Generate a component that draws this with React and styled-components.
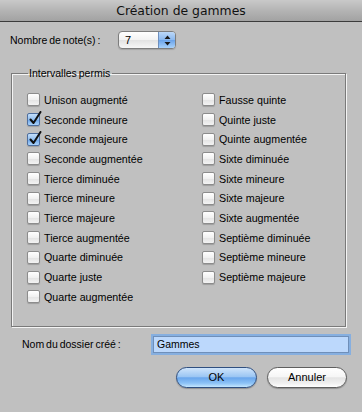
import styled, { createGlobalStyle } from 'styled-components';

const GlobalStyle = createGlobalStyle`
  html, body {
    margin: 0;
    padding: 0;
    background: #c0c0c0;
  }
  body {
    font-family: 'Liberation Sans', Arial, sans-serif;
    color: #000;
  }
`;

const Window = styled.div`
  width: 362px;
  height: 412px;
  background: #c0c0c0;
  display: flex;
  flex-direction: column;
  overflow: hidden;
`;

const TitleBar = styled.div`
  height: 21px;
  border-bottom: 1px solid #3c3c3c;
  background: linear-gradient(#c9c9c9, #b4b4b4 50%, #a2a2a2);
  display: flex;
  align-items: center;
  justify-content: center;
  font-family: 'DejaVu Sans', sans-serif;
  font-size: 12.4px;
  color: #111;
`;

const NoteRow = styled.div`
  display: flex;
  align-items: center;
  height: 18px;
  margin-top: 9px;
  padding-left: 10px;
`;

const Label = styled.span`
  font-size: 10.5px;
  word-spacing: -1px;
  width: ${(p) => p.$width}px;
  flex: none;
`;

const Popup = styled.div`
  width: 58px;
  height: 18px;
  box-sizing: border-box;
  border: 1px solid #7d7d7d;
  border-radius: 4px;
  display: flex;
  overflow: hidden;
  background: linear-gradient(#ffffff, #f2f2f2 50%, #e2e2e2 51%, #f6f6f6);
  box-shadow: 0 1px 1px rgba(0, 0, 0, 0.15);
`;

const PopupValue = styled.span`
  flex: 1;
  padding-left: 6px;
  font-size: 11px;
  line-height: 16px;
`;

const PopupArrows = styled.div`
  width: 16px;
  border-left: 1px solid #6e8fbd;
  background: linear-gradient(#bcd8f8, #8ab8ef 50%, #6aa3ea 51%, #a8d2fb);
  display: flex;
  align-items: center;
  justify-content: center;
`;

const Group = styled.fieldset`
  margin: 18px 0 0 11px;
  width: 335px;
  box-sizing: border-box;
  padding: 10px 0 19px 15px;
  border: 1px solid #7a7a7a;
  box-shadow: 1px 1px 0 #f4f4f4, inset 1px 1px 0 #f4f4f4;
`;

const Legend = styled.legend`
  font-size: 10.5px;
  word-spacing: -1px;
  padding: 0 2px 0 1px;
  margin-left: 1px;
  line-height: 13px;
`;

const Columns = styled.div`
  display: grid;
  grid-template-columns: 175px 1fr;
`;

const Column = styled.div`
  display: flex;
  flex-direction: column;
`;

const Item = styled.label`
  display: flex;
  align-items: center;
  height: 19.7px;
  gap: 4px;
  font-size: 10.7px;
`;

const Box = styled.span`
  position: relative;
  width: 13px;
  height: 13px;
  box-sizing: border-box;
  border-radius: 2px;
  flex: none;
  border: 1px solid ${(p) => (p.$checked ? '#4f6f9f' : '#8c8c8c')};
  background: ${(p) =>
    p.$checked
      ? 'linear-gradient(#c4def9, #92c0f1 50%, #6ca5ea 51%, #a9d3fb)'
      : 'linear-gradient(#ffffff, #f1f1f1 50%, #e3e3e3 51%, #f3f3f3)'};
  box-shadow: 0 1px 1px rgba(0, 0, 0, 0.18);
`;

const Tick = styled.svg`
  position: absolute;
  left: 1px;
  top: -3px;
`;

const NameRow = styled.div`
  display: flex;
  align-items: center;
  margin-top: 9px;
  padding-left: 22px;
`;

const TextField = styled.div`
  width: 196px;
  height: 17px;
  box-sizing: border-box;
  border: 1px solid #6f8fb9;
  background: #bcd8fc;
  box-shadow: 0 0 0 2px #86afe0;
  font-size: 10.5px;
  line-height: 15px;
  padding-left: 3px;
`;

const ButtonRow = styled.div`
  display: flex;
  justify-content: flex-end;
  gap: 10px;
  margin-top: 14px;
  padding-right: 15px;
`;

const Button = styled.button`
  width: ${(p) => p.$width}px;
  height: 21px;
  border-radius: 11px;
  font-family: 'Liberation Sans', Arial, sans-serif;
  font-size: 11px;
  color: #000;
  padding: 0;
  border: 1px solid ${(p) => (p.$primary ? '#2f4f80' : '#5e5e5e')};
  background: ${(p) =>
    p.$primary
      ? 'linear-gradient(#cfe4fb, #9cc6f3 45%, #6aa6ec 52%, #8cc2f6 80%, #c4e6fe)'
      : 'linear-gradient(#ffffff, #f6f6f6 45%, #e4e4e4 52%, #f0f0f0 80%, #ffffff)'};
  box-shadow: 0 1px 1px rgba(0, 0, 0, 0.25);
`;

const left = [
  ['Unison augmenté', false],
  ['Seconde mineure', true],
  ['Seconde majeure', true],
  ['Seconde augmentée', false],
  ['Tierce diminuée', false],
  ['Tierce mineure', false],
  ['Tierce majeure', false],
  ['Tierce augmentée', false],
  ['Quarte diminuée', false],
  ['Quarte juste', false],
  ['Quarte augmentée', false],
];

const right = [
  ['Fausse quinte', false],
  ['Quinte juste', false],
  ['Quinte augmentée', false],
  ['Sixte diminuée', false],
  ['Sixte mineure', false],
  ['Sixte majeure', false],
  ['Sixte augmentée', false],
  ['Septième diminuée', false],
  ['Septième mineure', false],
  ['Septième majeure', false],
];

function Checkbox({ label, checked }) {
  return (
    <Item>
      <Box $checked={checked}>
        {checked && (
          <Tick width="13" height="14" viewBox="0 0 13 14">
            <path d="M1.5 8.5 L4.5 12 L11.5 1" fill="none" stroke="#111" strokeWidth="2" strokeLinecap="round" strokeLinejoin="round" />
          </Tick>
        )}
      </Box>
      {label}
    </Item>
  );
}

export default function App() {
  return (
    <>
      <GlobalStyle />
      <Window>
        <TitleBar>Création de gammes</TitleBar>
        <NoteRow>
          <Label $width={108}>Nombre de note(s) :</Label>
          <Popup>
            <PopupValue>7</PopupValue>
            <PopupArrows>
              <svg width="7" height="11" viewBox="0 0 7 11">
                <path d="M3.5 0.5 L6.5 4 L0.5 4 Z M3.5 10.5 L6.5 7 L0.5 7 Z" fill="#1a1a1a" />
              </svg>
            </PopupArrows>
          </Popup>
        </NoteRow>
        <Group>
          <Legend>Intervalles permis</Legend>
          <Columns>
            <Column>
              {left.map(([l, c]) => (
                <Checkbox key={l} label={l} checked={c} />
              ))}
            </Column>
            <Column>
              {right.map(([l, c]) => (
                <Checkbox key={l} label={l} checked={c} />
              ))}
            </Column>
          </Columns>
        </Group>
        <NameRow>
          <Label $width={131}>Nom du dossier créé :</Label>
          <TextField>Gammes</TextField>
        </NameRow>
        <ButtonRow>
          <Button $primary $width={81}>OK</Button>
          <Button $width={80}>Annuler</Button>
        </ButtonRow>
      </Window>
    </>
  );
}
